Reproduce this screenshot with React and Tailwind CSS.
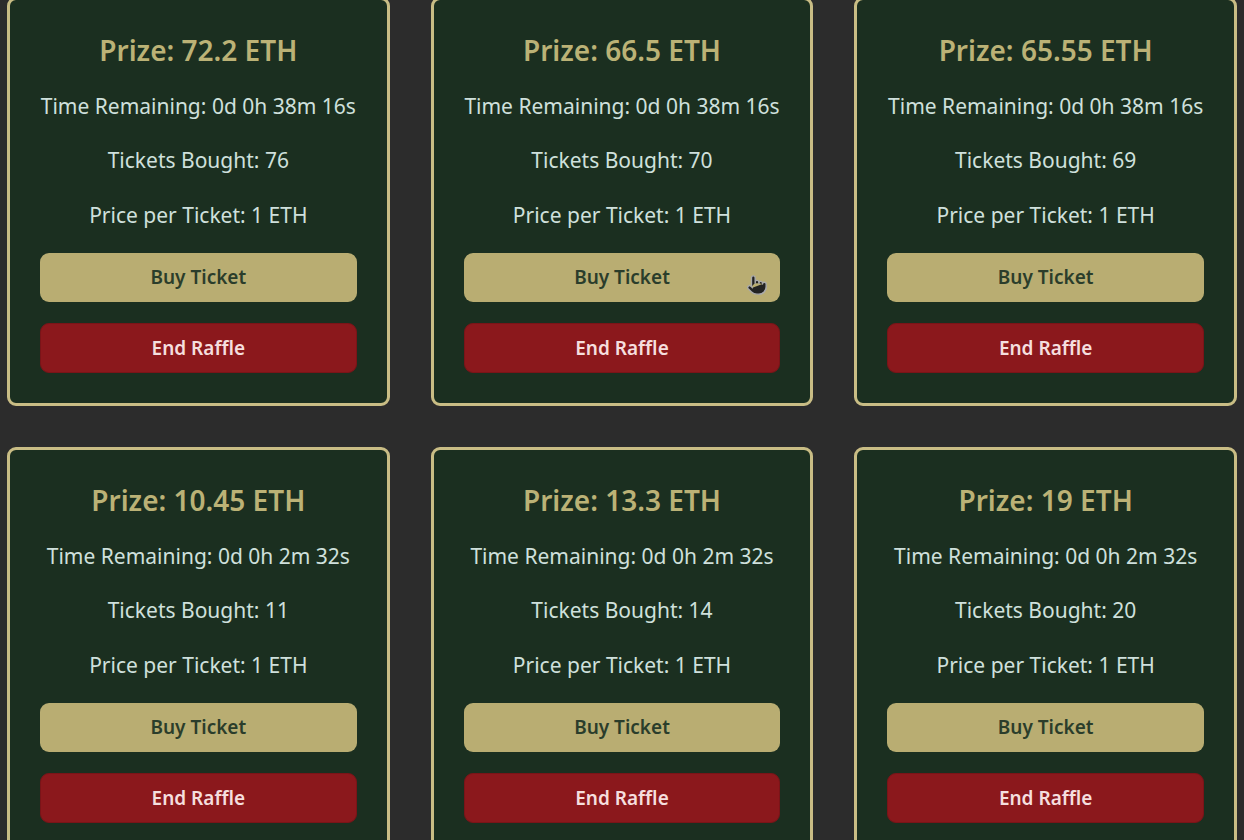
import {Pointer} from 'lucide-react';

const raffles = [
    {prize: '72.2', time: '0d 0h 38m 16s', tickets: 76},
    {prize: '66.5', time: '0d 0h 38m 16s', tickets: 70, hover: true},
    {prize: '65.55', time: '0d 0h 38m 16s', tickets: 69},
    {prize: '10.45', time: '0d 0h 2m 32s', tickets: 11},
    {prize: '13.3', time: '0d 0h 2m 32s', tickets: 14},
    {prize: '19', time: '0d 0h 2m 32s', tickets: 20},
];

const RaffleCard = ({raffle}) => {
    return (
        <div className="bg-[#1b2f20] border-[3px] border-[#c9bd85] rounded-[9px] h-[409px] px-[30px] pt-[33px] text-center">
            <h2 className="text-[28px] leading-[34px] font-semibold text-[#bbb276]">Prize: {raffle.prize} ETH</h2>
            <p className="mt-[25px] text-[21px] leading-[28px] text-[#cfe0dc]">Time Remaining: {raffle.time}</p>
            <p className="mt-[26px] text-[21px] leading-[28px] text-[#cfe0dc]">Tickets Bought: {raffle.tickets}</p>
            <p className="mt-[27px] text-[21px] leading-[28px] text-[#cfe0dc]">Price per Ticket: 1 ETH</p>

            <div className="relative mt-[24px]">
                <button className="w-full h-[49px] rounded-[9px] bg-[#b9ad72] text-[#2b3d2b] text-[19px] font-semibold">
                    Buy Ticket
                </button>
                {raffle.hover && (
                    <Pointer
                        size={22}
                        fill="#222"
                        color="#aaa"
                        strokeWidth={1.5}
                        className="absolute right-[12px] top-[21px]"
                    />
                )}
            </div>
            <button className="mt-[21px] w-full h-[50px] rounded-[9px] bg-[#8b181c] border border-[#7a1418] text-[#f5dede] text-[19px] font-semibold">
                End Raffle
            </button>
        </div>
    );
};

const App = () => {
    return (
        <div className="min-h-screen bg-[#2c2c2c] overflow-hidden" style={{fontFamily: '"Noto Sans", "Open Sans", sans-serif'}}>
            <div className="grid grid-cols-3 gap-x-[41px] gap-y-[41px] px-[7px] -mt-[3px]">
                {raffles.map((raffle, i) => (
                    <RaffleCard key={i} raffle={raffle}/>
                ))}
            </div>
        </div>
    );
};

export default App;
